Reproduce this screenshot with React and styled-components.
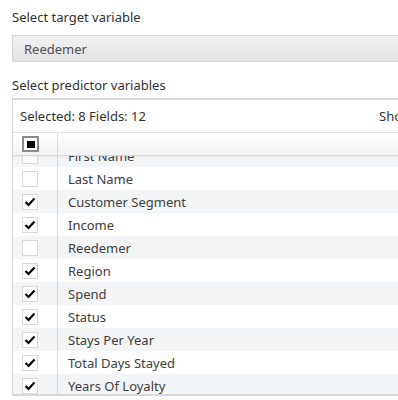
import React from "react";
import styled, { createGlobalStyle } from "styled-components";

const Global = createGlobalStyle`
  html, body { margin: 0; padding: 0; background: #ffffff; overflow: hidden; }
  body { font-family: "Noto Sans", "Open Sans", sans-serif; font-size: 13px; color: #3a3a3a; }
`;

const Page = styled.div`
  width: 520px;
  padding: 8px 0 0 12px;
  display: flex;
  flex-direction: column;
`;

const Label = styled.div`
  height: 18px;
  line-height: 18px;
  font-size: 13px;
  color: #333;
  margin-top: ${(p) => p.$mt || 0}px;
`;

const Dropdown = styled.div`
  margin-top: 9px;
  height: 27px;
  box-sizing: border-box;
  border: 1px solid #d4d4d4;
  background: linear-gradient(#f1f1f1, #e3e3e3);
  display: flex;
  align-items: center;
  padding-left: 11px;
  color: #505050;
`;

const Panel = styled.div`
  margin-top: 4px;
  border: 1px solid #dadada;
  border-top: 2px solid #dcdcdc;
  border-bottom: 2px solid #d8d8d8;
  display: flex;
  flex-direction: column;
  height: 298px;
  box-sizing: border-box;
`;

const Toolbar = styled.div`
  height: 32px;
  display: flex;
  align-items: center;
  padding: 0 0 0 7px;
  border-bottom: 1px solid #e4e4e4;
  color: #333;
`;

const ToolRight = styled.div`
  margin-left: auto;
  width: 152px;
  white-space: nowrap;
  color: #333;
`;

const HeaderRow = styled.div`
  height: 22px;
  display: grid;
  grid-template-columns: 45px 1fr;
  background: linear-gradient(#ffffff, #f2f2f2);
  border-bottom: 1px solid #d6d6d6;
  box-shadow: 0 2px 2px rgba(0, 0, 0, 0.04);
  position: relative;
  z-index: 1;
`;

const Cell = styled.div`
  display: flex;
  align-items: center;
  white-space: nowrap;
  border-right: ${(p) => (p.$divider ? "1px solid #d8d8d8" : "none")};
  padding-left: ${(p) => p.$pl || 0}px;
`;

const Viewport = styled.div`
  flex: 1;
  overflow: hidden;
`;

const List = styled.div`
  margin-top: -12px;
  display: flex;
  flex-direction: column;
`;

const Row = styled.div`
  height: 23px;
  flex: none;
  display: grid;
  grid-template-columns: 45px 1fr;
  background: ${(p) => (p.$alt ? "#f4f5f7" : "#ffffff")};
  color: #404040;
`;

const Box = styled.div`
  width: 16px;
  height: 16px;
  box-sizing: border-box;
  border: 1px solid #d9d9d9;
  background: #fff;
  display: flex;
  align-items: center;
  justify-content: center;
`;

const HeaderBox = styled.div`
  width: 17px;
  height: 16px;
  box-sizing: border-box;
  border: 2px solid #8a8a8a;
  background: #fff;
  display: flex;
  align-items: center;
  justify-content: center;
`;

const Inner = styled.div`
  width: 8px;
  height: 7px;
  background: #000;
`;

const Check = () => (
  <svg width="12" height="10" viewBox="0 0 12 10">
    <polyline points="1.5,5 4.5,8 10.5,1.5" fill="none" stroke="#000" strokeWidth="2.2" />
  </svg>
);

const rows = [
  ["First Name", false],
  ["Last Name", false],
  ["Customer Segment", true],
  ["Income", true],
  ["Reedemer", false],
  ["Region", true],
  ["Spend", true],
  ["Status", true],
  ["Stays Per Year", true],
  ["Total Days Stayed", true],
  ["Years Of Loyalty", true],
];

export default function App() {
  return (
    <>
      <Global />
      <Page>
        <Label>Select target variable</Label>
        <Dropdown>Reedemer</Dropdown>
        <Label $mt={14}>Select predictor variables</Label>
        <Panel>
          <Toolbar>
            <span>Selected: 8 Fields: 12</span>
            <ToolRight>Show selected only</ToolRight>
          </Toolbar>
          <HeaderRow>
            <Cell $divider $pl={9}>
              <HeaderBox>
                <Inner />
              </HeaderBox>
            </Cell>
            <Cell />
          </HeaderRow>
          <Viewport>
            <List>
              {rows.map(([name, checked], i) => (
                <Row key={name} $alt={i % 2 === 0}>
                  <Cell $divider $pl={9}>
                    <Box>{checked && <Check />}</Box>
                  </Cell>
                  <Cell $pl={10}>{name}</Cell>
                </Row>
              ))}
            </List>
          </Viewport>
        </Panel>
      </Page>
    </>
  );
}
